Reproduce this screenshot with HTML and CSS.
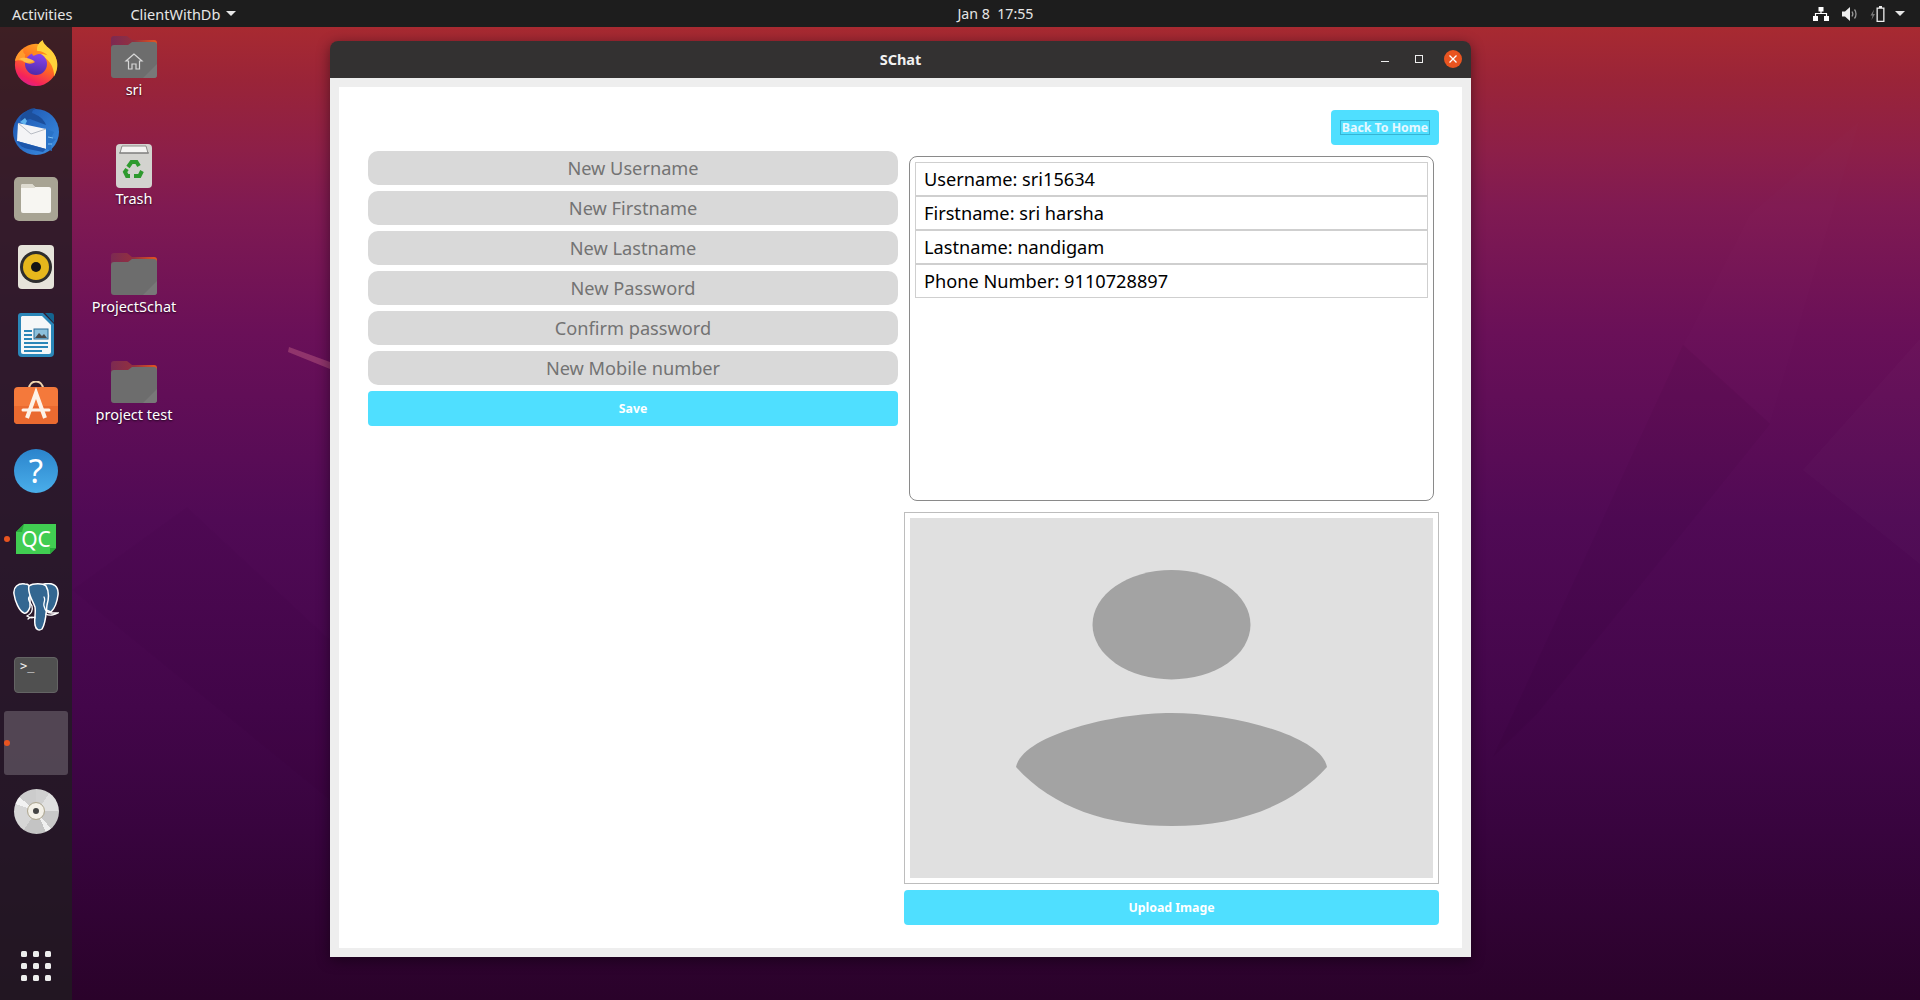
FILE: index.html
```html
<!DOCTYPE html>
<html lang="en">
  <head>
    <meta charset="UTF-8" />
    <title>SChat</title>
    <link rel="stylesheet" href="styles.css">
  </head>
  <body>
    <svg class="wallpaper" viewBox="0 0 1920 1000">
      <polygon points="1683,345 1770,424 1537,714 1493,757" fill="#000" opacity="0.03"></polygon>
      <polygon points="1683,345 1750,214 1860,120 1770,424" fill="#fff" opacity="0.008"></polygon>
      <polygon points="1920,339 1803,470 1920,564" fill="#fff" opacity="0.015"></polygon>
      <polygon points="289,347 330,362 330,369 288,352" fill="#f08a9a" opacity="0.3"></polygon>
      <polygon points="72,590 187,507 330,640 330,800" fill="#000" opacity="0.015"></polygon>
    </svg>

    <header class="topbar">
      <span class="topbar-activities">Activities</span>
      <span class="topbar-app">ClientWithDb<i class="caret"></i></span>
      <span class="topbar-clock">Jan 8&nbsp;&nbsp;17:55</span>
      <div class="topbar-tray">
        <svg class="tray-icon" width="16" height="14" viewBox="0 0 16 14">
          <path d="M5.500 0h5v4.500h-5zM0 9h5v5h-5zM11 9h5v5h-5z" fill="#fff"></path>
          <path d="M8 4v3M2.500 9V6.500h11V9" fill="none" stroke="#fff" stroke-width="1.200"></path>
        </svg>
        <svg class="tray-icon" width="15" height="14" viewBox="0 0 15 14">
          <path d="M0 4.500h3L8 0v14L3 9.500H0z" fill="#eee"></path>
          <path d="M10 4.500c1 1.500 1 3.500 0 5M12.500 2.500c2 2.500 2 6.500 0 9" fill="none" stroke="#999" stroke-width="1.300"></path>
        </svg>
        <svg class="tray-icon tray-last" width="15" height="16" viewBox="0 0 15 16">
          <path d="M4 3.500 0.500 9.500h2L1.500 14 5 8H3z" fill="#777"></path>
          <path d="M9 0h3v1.500h2.500V16H6.500V1.500H9zM7.800 2.800v12h5.400v-12z" fill="#eee"></path>
        </svg>
        <i class="caret"></i>
      </div>
    </header>

    <nav class="dock">
      <div class="dock-item">
        <svg width="46" height="48" viewBox="0 0 48 48">
          <defs>
            <linearGradient id="foxBody" x1="0.8" y1="0" x2="0.3" y2="1">
              <stop offset="0" stop-color="#ffb224"></stop>
              <stop offset="0.5" stop-color="#ff6a22"></stop>
              <stop offset="0.85" stop-color="#f5225c"></stop>
              <stop offset="1" stop-color="#d8208e"></stop>
            </linearGradient>
            <linearGradient id="foxBall" x1="0.6" y1="0" x2="0.4" y2="1">
              <stop offset="0" stop-color="#8a45f0"></stop>
              <stop offset="1" stop-color="#4e2aa8"></stop>
            </linearGradient>
          </defs>
          <circle cx="24" cy="26" r="22" fill="url(#foxBody)"></circle>
          <path d="M31 0c1 7 13 10 15 23 1 6-1 11-3 15 0-11-6-19-17-24-2-5-1-10 5-14z" fill="#ffd23a"></path>
          <circle cx="24" cy="25" r="11.500" fill="url(#foxBall)"></circle>
          <path d="M20 13c6-3 12-1 16 3-5-2-10-2-13 0-2 1-3 0-3-3z" fill="#ff8a1e"></path>
          <path d="M2 22c1-6 5-11 9-13-1 3 0 5 2 6-1 3-1 4 1 5 4 1 8 1 9 3-3 2-6 2-9 1-4-2-8-4-12-2z" fill="#ff9a2c"></path>
          <path d="M6 20c5-3 12-1 16 2-4 2-7 2-10 1-2-2-4-3-6-3z" fill="#ffbe4a"></path>
        </svg>
      </div>
      <div class="dock-item">
        <svg width="48" height="48" viewBox="0 0 48 48">
          <defs>
            <linearGradient id="birdBody" x1="0" y1="0" x2="1" y2="1">
              <stop offset="0" stop-color="#1b52ad"></stop>
              <stop offset="1" stop-color="#3c8fe4"></stop>
            </linearGradient>
          </defs>
          <circle cx="24" cy="25" r="23" fill="url(#birdBody)"></circle>
          <path d="M8 12c3-7 9-11 16-11-3 2-4 3-4 5 6 2 12 6 14 12l-16-6-8 2z" fill="#1c4f9c"></path>
          <path d="M13 11l2 3-2 4-5-3z" fill="#62b4ee"></path>
          <path d="M6 16l28 6v20L5 34z" fill="#f4f4f6"></path>
          <path d="M6 16l13 11 15-5" fill="none" stroke="#b8bcc4" stroke-width="1"></path>
          <path d="M5 34l29 8-3 3-15-3c-5-1-9-4-11-8z" fill="#1d57ab"></path>
          <path d="M34 22l8 3-3 6 5 1-5 5 1 7-6-2z" fill="#2a73c8"></path>
          <path d="M36 30l5 1M36 37l4 0" stroke="#7fc0f0" stroke-width="1"></path>
        </svg>
      </div>
      <div class="dock-item">
        <svg width="44" height="44" viewBox="0 0 44 44">
          <rect width="44" height="44" rx="5" fill="#a8a494"></rect>
          <path d="M7 9a2 2 0 0 1 2-2h9l3 3h14a2 2 0 0 1 2 2v22a2 2 0 0 1-2 2H9a2 2 0 0 1-2-2z" fill="#f7f6f2"></path>
          <path d="M7 9a2 2 0 0 1 2-2h9l3 3v1H7z" fill="#dedbd0"></path>
        </svg>
      </div>
      <div class="dock-item">
        <svg width="36" height="44" viewBox="0 0 36 44">
          <rect width="36" height="44" rx="4" fill="#e6e3da"></rect>
          <circle cx="18" cy="22" r="16" fill="#2e2e2e"></circle>
          <circle cx="18" cy="22" r="13" fill="#e6b71c"></circle>
          <circle cx="18" cy="22" r="5" fill="#151515"></circle>
        </svg>
      </div>
      <div class="dock-item">
        <svg width="36" height="44" viewBox="0 0 36 44">
          <path d="M3 0h22l11 11v29a4 4 0 0 1-4 4H4a4 4 0 0 1-4-4V3a3 3 0 0 1 3-3z" fill="#2a86b8"></path>
          <path d="M4 3h20l9 9v27a2 2 0 0 1-2 2H5a2 2 0 0 1-2-2V4z" fill="#f5f7f8"></path>
          <path d="M27 0h6a3 3 0 0 1 3 3v7z" fill="#14638f"></path>
          <path d="M6 17h8v2H6zM6 21h8v2H6zM6 25h8v2H6zM6 29h24v2H6zM6 33h24v2H6zM6 37h18v2H6z" fill="#2a86b8"></path>
          <rect x="16" y="16" width="14" height="10" fill="#8cc0dc" stroke="#2a6f98"></rect>
          <path d="M17 25l4-5 3 3 2-2 3 4z" fill="#4a4a4a"></path>
        </svg>
      </div>
      <div class="dock-item">
        <svg width="44" height="44" viewBox="0 0 44 44">
          <path d="M15 8c0-10 14-10 14 0" fill="none" stroke="#f0d5b0" stroke-width="2"></path>
          <rect y="6" width="44" height="37" rx="4" fill="#f4793b"></rect>
          <path d="M0 25h44v14a4 4 0 0 1-4 4H4a4 4 0 0 1-4-4z" fill="#ea6a30"></path>
          <path d="M13 37l9-25 9 25" fill="none" stroke="#fdf2e8" stroke-width="4"></path>
          <path d="M9 29h26" stroke="#fdf2e8" stroke-width="3" stroke-linecap="round"></path>
        </svg>
      </div>
      <div class="dock-item">
        <div class="help-icon">?</div>
      </div>
      <div class="dock-item has-window">
        <svg width="40" height="30" viewBox="0 0 40 30">
          <path d="M8 0h32v24l-6 6H0V8z" fill="#41cd52"></path>
          <path d="M8 0 0 8h6zM40 24l-6 6v-6z" fill="#2aa83c"></path>
          <text class="qc-mark" x="20" y="23" text-anchor="middle">QC</text>
        </svg>
      </div>
      <div class="dock-item">
        <svg width="46" height="48" viewBox="0 0 46 48">
          <g fill="#336791" stroke="#fff" stroke-width="1.500" stroke-linejoin="round">
            <path d="M12 1C5 0 0 4 1 11c1 7 5 17 10 19 3 1 5-3 6-6V6c0-3-2-5-5-5z"></path>
            <path d="M31 1c9-2 15 2 14 11-1 8-3 13-7 17l-5-2V5z"></path>
            <path d="M16 3c4-3 14-3 17 0 3 5 3 12 1 19-1 8-1 18-5 24-3 2-6 1-7-4-1-6 1-12 0-18-2-6-8-14-6-21z"></path>
          </g>
          <g fill="none" stroke="#fff" stroke-width="1.300" stroke-linecap="round">
            <path d="M16 14c-2 3 2 6 3 9 1 4-1 8-5 10 3 2 6 2 8 1"></path>
            <path d="M31 14c2 3-1 6 0 9 1 4 3 7 7 7h7c-3 2-9 3-12 1"></path>
            <path d="M15 36c2-2 5-2 7-1"></path>
          </g>
        </svg>
      </div>
      <div class="dock-item">
        <div class="terminal-icon">&gt;_</div>
      </div>
      <div class="dock-item is-active has-window"></div>
      <div class="dock-item">
        <div class="disc-icon"><span class="disc-hole"></span></div>
      </div>
      <div class="dock-apps">
        <span></span><span></span><span></span>
        <span></span><span></span><span></span>
        <span></span><span></span><span></span>
      </div>
    </nav>

    <div class="desktop-icons">
      <div class="desktop-icon">
        <svg width="46" height="42" viewBox="0 0 46 42">
          <use href="#folderShape"></use>
          <path d="M23 18l-8 7h2.500v8h3.500v-5h4v5h3.500v-8H31z" fill="none" stroke="#d8d8d8" stroke-width="1.200"></path>
        </svg>
        <span>sri</span>
      </div>
      <div class="desktop-icon trash-icon">
        <svg width="36" height="44" viewBox="0 0 36 44">
          <rect width="36" height="44" rx="4" fill="#d3d3cf"></rect>
          <path d="M4 9l2-7h24l2 7z" fill="#f4f4f2" stroke="#8d8d8a"></path>
          <path d="M3 9h30" stroke="#777" stroke-width="1"></path>
          <g fill="none" stroke="#2e9a2e" stroke-width="4">
            <path d="M12 23l3.500-5h5l2.500 4"></path>
            <path d="M26 27l-2.500 5H18"></path>
            <path d="M14 32h-3l-2-4 2-3"></path>
          </g>
        </svg>
        <span>Trash</span>
      </div>
      <div class="desktop-icon">
        <svg width="46" height="42" viewBox="0 0 46 42"><use href="#folderShape"></use></svg>
        <span>ProjectSchat</span>
      </div>
      <div class="desktop-icon">
        <svg width="46" height="42" viewBox="0 0 46 42"><use href="#folderShape"></use></svg>
        <span>project test</span>
      </div>
    </div>

    <svg class="svg-defs" width="0" height="0">
      <defs>
        <linearGradient id="folderTab" x1="0" y1="0" x2="1" y2="0">
          <stop offset="0" stop-color="#7c2a52"></stop>
          <stop offset="0.5" stop-color="#93303f"></stop>
          <stop offset="1" stop-color="#e8551f"></stop>
        </linearGradient>
        <g id="folderShape">
          <path d="M3 0h13l5 4h22a3 3 0 0 1 3 3v14H0V3a3 3 0 0 1 3-3z" fill="url(#folderTab)"></path>
          <path d="M3 9h14l4-3h22a3 3 0 0 1 3 3v30a3 3 0 0 1-3 3H3a3 3 0 0 1-3-3V12a3 3 0 0 1 3-3z" fill="#6d6d6d"></path>
          <path d="M46 28v11a3 3 0 0 1-3 3H32z" fill="#787878"></path>
        </g>
      </defs>
    </svg>

    <div class="app-window">
      <div class="titlebar">
        <span class="titlebar-name">SChat</span>
        <div class="titlebar-buttons">
          <span class="btn-min"></span>
          <span class="btn-max"></span>
          <svg class="btn-close" width="18" height="18" viewBox="0 0 18 18">
            <circle cx="9" cy="9" r="9" fill="#e95420"></circle>
            <path d="M5.500 5.500l7 7M12.500 5.500l-7 7" stroke="#fff" stroke-width="1.300"></path>
          </svg>
        </div>
      </div>
      <div class="window-frame">
        <div class="window-body">
          <div class="top-row">
            <button type="button" class="action-btn back-btn"><span>Back To Home</span></button>
          </div>
          <div class="main-grid">
            <form class="edit-form">
              <input class="field" type="text" placeholder="New Username" />
              <input class="field" type="text" placeholder="New Firstname" />
              <input class="field" type="text" placeholder="New Lastname" />
              <input class="field" type="password" placeholder="New Password" />
              <input class="field" type="password" placeholder="Confirm password" />
              <input class="field" type="tel" placeholder="New Mobile number" />
              <button type="button" class="action-btn">Save</button>
            </form>
            <div class="profile">
              <div class="details-box">
                <ul class="details-list">
                  <li>Username: sri15634</li>
                  <li>Firstname: sri harsha</li>
                  <li>Lastname: nandigam</li>
                  <li>Phone Number: 9110728897</li>
                </ul>
              </div>
              <div class="avatar-frame">
                <svg class="avatar" viewBox="0 0 523 360">
                  <ellipse cx="261.500" cy="106.700" rx="79" ry="54.700" fill="#a3a3a3"></ellipse>
                  <path d="M106 249C112 218 200 195 261.500 195S411 218 417 249C380 290 325 308 261.500 308S143 290 106 249Z" fill="#a3a3a3"></path>
                </svg>
              </div>
              <button type="button" class="action-btn">Upload Image</button>
            </div>
          </div>
        </div>
      </div>
    </div>
  </body>
</html>
```

FILE: styles.css
```css
* {
  box-sizing: border-box;
}

html,
body {
  margin: 0;
  height: 100%;
}

body {
  position: relative;
  width: 1920px;
  height: 1000px;
  overflow: hidden;
  font-family: "Noto Sans", "Open Sans", sans-serif;
  background: linear-gradient(
    180deg,
    #a82a31 27px,
    #9a2438 80px,
    #8d1f48 150px,
    #801a52 207px,
    #6a1058 332px,
    #500a55 520px,
    #43064a 707px,
    #38043e 832px,
    #2a022a 1000px
  );
}

.wallpaper {
  position: absolute;
  left: 0;
  top: 0;
  width: 1920px;
  height: 1000px;
}

.svg-defs {
  position: absolute;
}

/* top bar */
.topbar {
  position: relative;
  z-index: 3;
  display: flex;
  align-items: center;
  height: 27px;
  padding-left: 12px;
  background-color: #1d1d1d;
  color: #e6e6e6;
  font-size: 14.500px;
}

.topbar-app {
  display: flex;
  align-items: center;
  margin-left: 58px;
}

.topbar-clock {
  margin-left: 721px;
  font-size: 14.200px;
}

.topbar-tray {
  display: flex;
  align-items: center;
  margin-left: auto;
  padding-right: 15px;
}

.tray-icon {
  margin-right: 13px;
}

.tray-last {
  margin-right: 4px;
}

.caret {
  width: 0;
  height: 0;
  margin-left: 6px;
  border-left: 5px solid transparent;
  border-right: 5px solid transparent;
  border-top: 5px solid #e6e6e6;
}

/* dock */
.dock {
  position: absolute;
  z-index: 2;
  left: 0;
  top: 27px;
  bottom: 0;
  width: 72px;
  display: flex;
  flex-direction: column;
  padding-top: 2px;
  background-color: rgba(32, 28, 32, 0.78);
}

.dock-item {
  position: relative;
  display: flex;
  align-items: center;
  justify-content: center;
  height: 68px;
  flex-shrink: 0;
}

.is-active {
  margin: 2px 4px;
  height: 64px;
  background-color: rgba(255, 255, 255, 0.2);
  border-radius: 3px;
}

.has-window::before {
  content: "";
  position: absolute;
  left: 4px;
  top: 50%;
  width: 6px;
  height: 6px;
  margin-top: -3px;
  border-radius: 50%;
  background-color: #e95420;
}

.is-active::before {
  left: 0;
}

.help-icon {
  width: 44px;
  height: 44px;
  border-radius: 50%;
  background: linear-gradient(180deg, #2b84cc, #4aaeea);
  color: #fff;
  font-size: 33px;
  line-height: 44px;
  text-align: center;
}

.qc-mark {
  font-family: "Noto Sans", sans-serif;
  font-size: 21px;
  fill: #fff;
}

.terminal-icon {
  width: 44px;
  height: 36px;
  padding: 0 0 0 5px;
  background-color: #505050;
  border: 1px solid #646464;
  border-radius: 4px;
  color: #eee;
  font-family: "DejaVu Sans Mono", monospace;
  font-size: 12px;
  line-height: 16px;
}

.disc-icon {
  display: flex;
  align-items: center;
  justify-content: center;
  width: 45px;
  height: 45px;
  border-radius: 50%;
  background: conic-gradient(
    #d0d0d0 0 35deg,
    #e0e0e0 35deg 90deg,
    #c8c8c8 90deg 140deg,
    #f0f0f0 140deg 155deg,
    #c4c4c4 155deg 215deg,
    #d6d6d6 215deg 290deg,
    #f2f2f2 290deg 310deg,
    #cccccc 310deg 360deg
  );
}

.disc-hole {
  width: 16px;
  height: 16px;
  border-radius: 50%;
  border: 5px solid #f4f1e8;
  outline: 1px solid #b0a890;
  background-color: #444;
}

.dock-apps {
  display: grid;
  grid-template-columns: repeat(3, 6px);
  gap: 6px;
  margin: auto auto 19px;
}

.dock-apps span {
  height: 6px;
  border-radius: 1.500px;
  background-color: #eee;
}

/* desktop icons */
.desktop-icons {
  position: absolute;
  z-index: 1;
  left: 80px;
  top: 36px;
  width: 108px;
  display: flex;
  flex-direction: column;
}

.desktop-icon {
  display: flex;
  flex-direction: column;
  align-items: center;
  height: 108.300px;
  color: #fff;
  font-size: 14.500px;
  text-shadow: 0 1px 2px rgba(0, 0, 0, 0.7);
}

.desktop-icon span {
  margin-top: 1px;
}

.trash-icon span {
  margin-top: 0;
}

/* app window */
.app-window {
  position: absolute;
  z-index: 1;
  left: 330px;
  top: 41px;
  width: 1141px;
  height: 916px;
  display: flex;
  flex-direction: column;
  border-radius: 8px 8px 0 0;
  box-shadow: 0 3px 14px rgba(0, 0, 0, 0.45);
}

.titlebar {
  position: relative;
  flex-shrink: 0;
  display: flex;
  align-items: center;
  justify-content: center;
  height: 37px;
  background-color: #333131;
  border-radius: 8px 8px 0 0;
}

.titlebar-name {
  margin-top: -1px;
  color: #f2f2f2;
  font-size: 14.500px;
  font-weight: 700;
}

.titlebar-buttons {
  position: absolute;
  right: 9px;
  top: 9px;
  display: flex;
  align-items: center;
}

.btn-min {
  width: 8px;
  height: 1px;
  margin: 5px 26px 0 0;
  background-color: #eee;
}

.btn-max {
  width: 8px;
  height: 8px;
  margin: 0 21px 0 0;
  border: 1px solid #eee;
}

.window-frame {
  flex: 1;
  display: flex;
  padding: 9px;
  background-color: #eeeeee;
}

.window-body {
  flex: 1;
  padding: 23px 23px 0 29px;
  background-color: #fff;
}

.top-row {
  display: flex;
  justify-content: flex-end;
  margin-bottom: 6px;
}

.main-grid {
  display: grid;
  grid-template-columns: 530px 535px;
  column-gap: 6px;
  align-items: start;
}

.edit-form {
  display: flex;
  flex-direction: column;
  gap: 6px;
}

.field {
  display: block;
  width: 100%;
  height: 34px;
  padding: 0 10px;
  border: none;
  border-radius: 10px;
  background-color: #d9d9d9;
  color: #222;
  font-family: inherit;
  font-size: 18.200px;
  text-align: center;
  outline: none;
}

.field::placeholder {
  color: #737373;
  opacity: 1;
}

.action-btn {
  height: 35px;
  padding: 0;
  border: none;
  border-radius: 4px;
  background-color: #4fdfff;
  color: #fff;
  font-family: inherit;
  font-size: 12.300px;
  font-weight: 700;
}

.back-btn {
  width: 108px;
  color: #e6f8ff;
}

.back-btn span {
  display: inline-block;
  padding: 0 1px;
  border: 1px solid #38b4d4;
  line-height: 13px;
}

.profile {
  display: flex;
  flex-direction: column;
}

.details-box {
  height: 345px;
  margin: 5px 5px 0;
  padding: 5px;
  border: 1px solid #8a8a8a;
  border-radius: 8px;
}

.details-list {
  list-style: none;
  margin: 0;
  padding: 0;
}

.details-list li {
  height: 34px;
  padding-left: 8px;
  border: 1px solid #cfcfcf;
  color: #000;
  font-size: 18.200px;
  line-height: 33px;
}

.avatar-frame {
  height: 372px;
  margin-top: 11px;
  margin-bottom: 6px;
  padding: 5px;
  border: 1px solid #bdbdbd;
}

.avatar {
  display: block;
  width: 523px;
  height: 360px;
  background-color: #e0e0e0;
}
```
